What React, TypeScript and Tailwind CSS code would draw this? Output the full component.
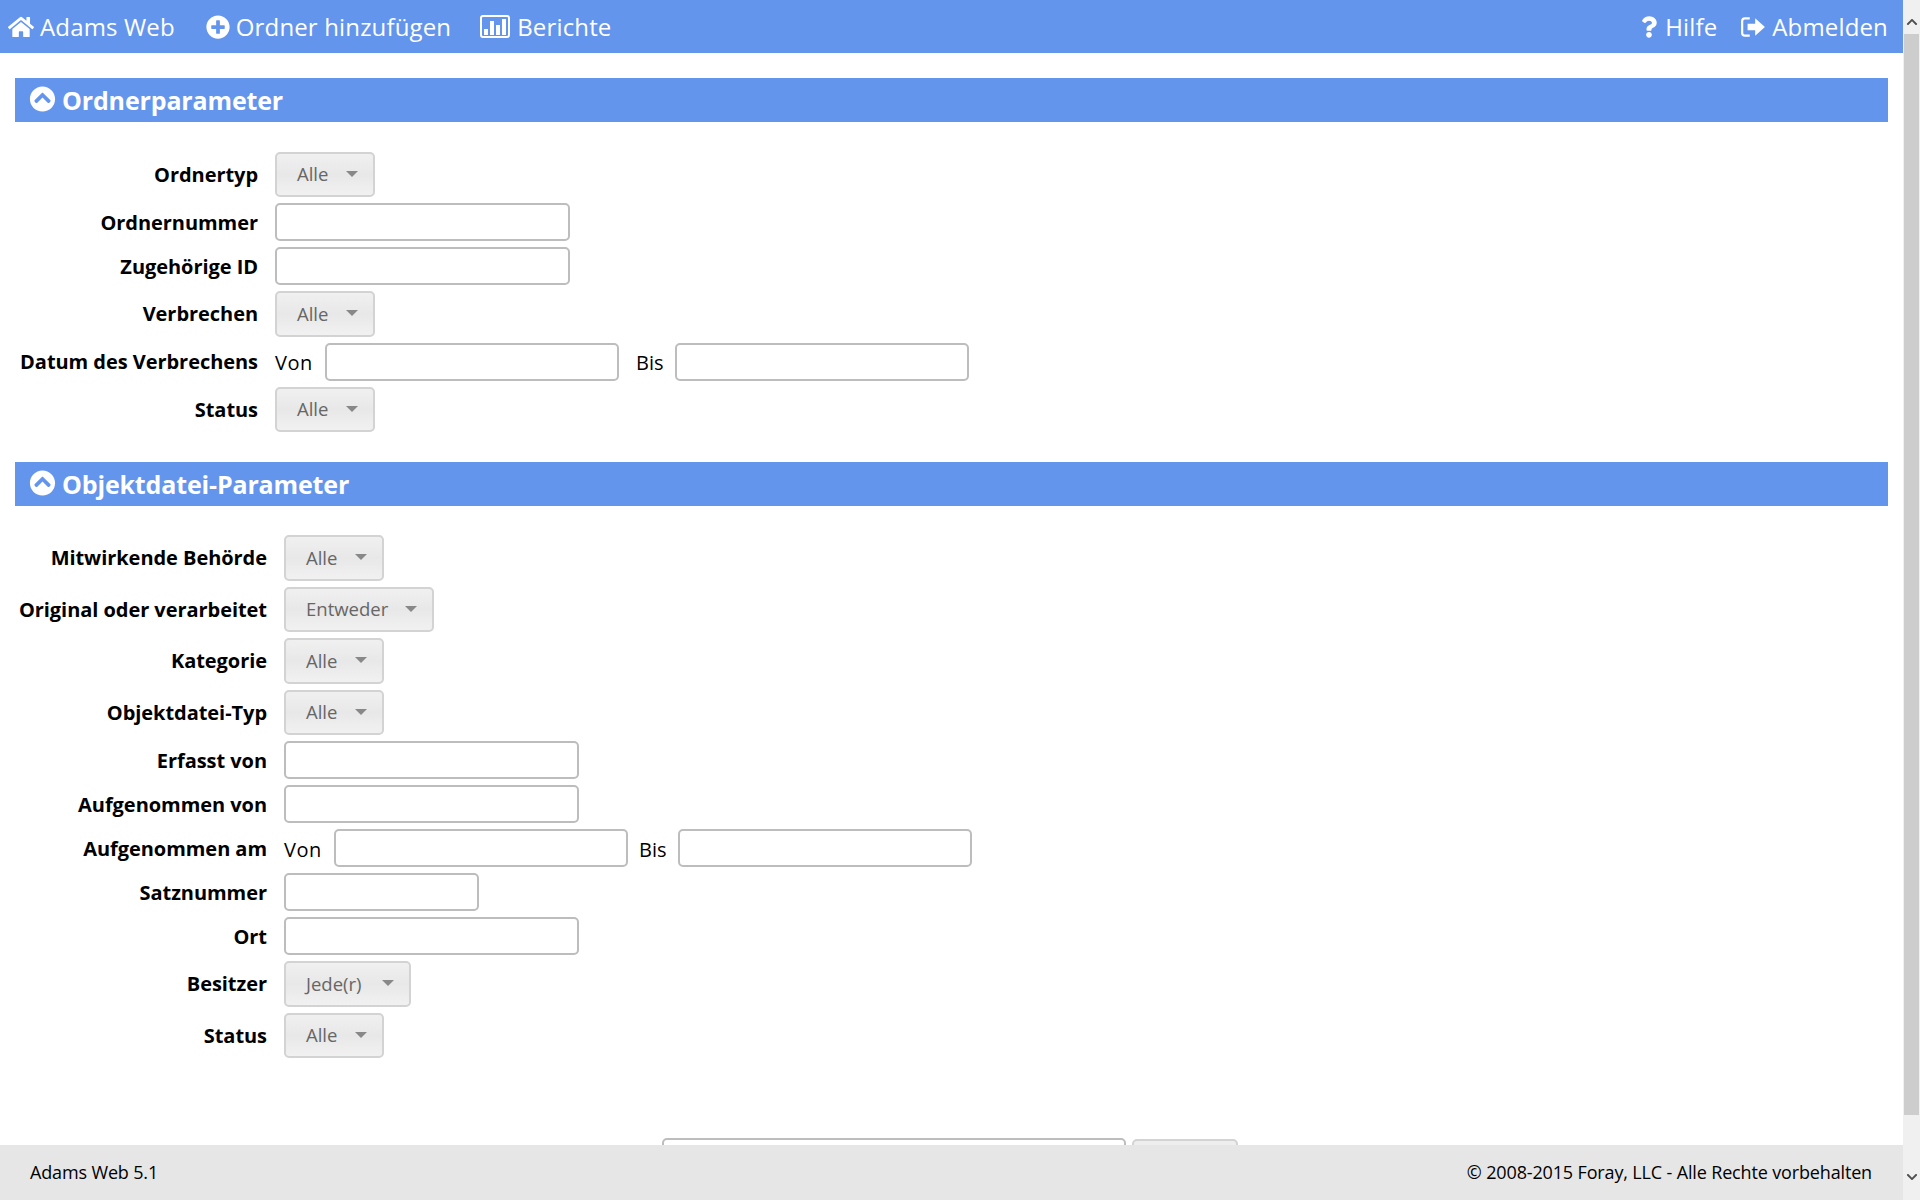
import React from "react";
import { FaHome, FaPlusCircle, FaQuestion, FaChevronCircleUp, FaChevronUp, FaChevronDown } from "react-icons/fa";

const font = { fontFamily: '"Open Sans", "Noto Sans", sans-serif' };

function Dropdown({ text, w }: { text: string; w: string }) {
  return (
    <div className={`${w} h-[45.5px] flex items-center justify-between pl-[20px] pr-[15px] rounded-[5px] border-2 border-[#d3d3d3] bg-gradient-to-b from-[#f0f0f0] via-[#e8e8e8] to-[#f1f1f1] text-[18.5px] text-[#666]`}>
      <span>{text}</span>
      <span className="w-0 h-0 -mt-[1px] border-x-[6px] border-x-transparent border-t-[6px] border-t-[#888]" />
    </div>
  );
}

function Input({ w }: { w: string }) {
  return <div className={`${w} h-[38px] rounded-[5px] border-2 border-[#bdbdbd] bg-white`} />;
}

function Row({ label, labelW, children }: { label: string; labelW: string; children: React.ReactNode }) {
  return (
    <div className="flex items-center gap-[17px]">
      <div className={`${labelW} pt-[1px] text-right text-[20px] font-bold text-black tracking-[-0.05px] whitespace-nowrap`}>{label}</div>
      {children}
    </div>
  );
}

function Range({ inputW, bisGap, gapVon }: { inputW: string; bisGap: string; gapVon: string }) {
  return (
    <div className="flex items-center text-[20px] text-black">
      <span className={`${gapVon} pt-[3px] tracking-[0.5px]`}>Von</span>
      <Input w={inputW} />
      <span className={`${bisGap} pt-[3px]`}>Bis</span>
      <Input w={inputW} />
    </div>
  );
}

function Header({ title }: { title: string }) {
  return (
    <div className="h-[44px] bg-[#6495ed] flex items-center pl-[14px] text-white font-bold text-[25px] tracking-[-0.15px]">
      <FaChevronCircleUp className="w-[27px] h-[26px] mr-[6px] -mt-[2px]" />
      <span className="pt-[1px]">{title}</span>
    </div>
  );
}

function NavItem({ icon, text, cls }: { icon: React.ReactNode; text: string; cls: string }) {
  return (
    <div className={`flex items-center ${cls} text-white text-[24px] tracking-[0.15px] whitespace-nowrap`}>
      {icon}
      <span>{text}</span>
    </div>
  );
}

function BarChartIcon() {
  return (
    <svg viewBox="0 0 30 23" className="w-[30px] h-[23px]" fill="#fff">
      <rect x="1" y="1" width="28" height="21" rx="2" fill="none" stroke="#fff" strokeWidth="2" />
      <rect x="4" y="14" width="4" height="6" />
      <rect x="10" y="6" width="4" height="14" />
      <rect x="16" y="10" width="4" height="10" />
      <rect x="22" y="4" width="4" height="16" />
    </svg>
  );
}

function SignOutIcon() {
  return (
    <svg viewBox="0 0 24 20" className="w-[26px] h-[22px]">
      <path d="M9 2H4.5Q2 2 2 4.5V15.500Q2 18 4.500 18H9" fill="none" stroke="#fff" strokeWidth="2" />
      <polygon points="7,7 14,7 14,2 23,10 14,18 14,13 7,13" fill="#fff" />
    </svg>
  );
}

export default function App() {
  return (
    <div className="w-[1920px] h-[1200px] flex overflow-hidden bg-white" style={font}>
      <div className="w-[1903px] h-full flex flex-col">
        <nav className="h-[53px] shrink-0 bg-[#6495ed] flex items-center justify-between pl-[8px] pr-[15px]">
          <div className="flex items-center gap-[29px]">
            <NavItem cls="gap-[6px]" icon={<FaHome className="w-[26px] h-[24px]" />} text="Adams Web" />
            <NavItem cls="gap-[6px] ml-[2px]" icon={<FaPlusCircle className="w-[24px] h-[24px]" />} text="Ordner hinzufügen" />
            <NavItem cls="gap-[7px]" icon={<BarChartIcon />} text="Berichte" />
          </div>
          <div className="flex items-center gap-[23px]">
            <NavItem cls="gap-[8px]" icon={<FaQuestion className="w-[16px] h-[22px]" />} text="Hilfe" />
            <NavItem cls="gap-[6px] tracking-[0.3px]" icon={<SignOutIcon />} text="Abmelden" />
          </div>
        </nav>
        <main className="flex-1 overflow-hidden pt-[25px] px-[15px]">
          <Header title="Ordnerparameter" />
          <div className="flex flex-col gap-[6px] pt-[29.500px]">
            <Row label="Ordnertyp" labelW="w-[243px]"><Dropdown text="Alle" w="w-[100px]" /></Row>
            <Row label="Ordnernummer" labelW="w-[243px]"><Input w="w-[295px]" /></Row>
            <Row label="Zugehörige ID" labelW="w-[243px]"><Input w="w-[295px]" /></Row>
            <Row label="Verbrechen" labelW="w-[243px]"><Dropdown text="Alle" w="w-[100px]" /></Row>
            <Row label="Datum des Verbrechens" labelW="w-[243px]"><Range inputW="w-[294px]" gapVon="w-[50px]" bisGap="w-[56px] pl-[17px]" /></Row>
            <Row label="Status" labelW="w-[243px]"><Dropdown text="Alle" w="w-[100px]" /></Row>
          </div>
          <div className="mt-[30px]"><Header title="Objektdatei-Parameter" /></div>
          <div className="flex flex-col gap-[6px] pt-[29px]">
            <Row label="Mitwirkende Behörde" labelW="w-[252px]"><Dropdown text="Alle" w="w-[100px]" /></Row>
            <Row label="Original oder verarbeitet" labelW="w-[252px]"><Dropdown text="Entweder" w="w-[150px]" /></Row>
            <Row label="Kategorie" labelW="w-[252px]"><Dropdown text="Alle" w="w-[100px]" /></Row>
            <Row label="Objektdatei-Typ" labelW="w-[252px]"><Dropdown text="Alle" w="w-[100px]" /></Row>
            <Row label="Erfasst von" labelW="w-[252px]"><Input w="w-[295px]" /></Row>
            <Row label="Aufgenommen von" labelW="w-[252px]"><Input w="w-[295px]" /></Row>
            <Row label="Aufgenommen am" labelW="w-[252px]"><Range inputW="w-[294px]" gapVon="w-[50px]" bisGap="w-[50px] pl-[11px]" /></Row>
            <Row label="Satznummer" labelW="w-[252px]"><Input w="w-[195px]" /></Row>
            <Row label="Ort" labelW="w-[252px]"><Input w="w-[295px]" /></Row>
            <Row label="Besitzer" labelW="w-[252px]"><Dropdown text="Jede(r)" w="w-[127px]" /></Row>
            <Row label="Status" labelW="w-[252px]"><Dropdown text="Alle" w="w-[100px]" /></Row>
          </div>
          <div className="flex gap-[6px] mt-[80px] ml-[647px]">
            <Input w="w-[464px]" />
            <div className="w-[106px] h-[38px] mt-[1px] rounded-[5px] border-2 border-[#d3d3d3] bg-[#eeeeee]" />
          </div>
        </main>
        <footer className="h-[55px] shrink-0 bg-[#e6e6e6] flex items-center justify-between pl-[30px] pr-[31px] text-[18px] text-black tracking-[-0.15px]">
          <span>Adams Web 5.1</span>
          <span>© 2008-2015 Foray, LLC - Alle Rechte vorbehalten</span>
        </footer>
      </div>
      <div className="w-[17px] h-full flex flex-col bg-[#f0f0f0]">
        <div className="h-[34px] flex justify-center pt-[16px] text-[#505050]"><FaChevronUp className="w-[12px] h-[12px]" /></div>
        <div className="h-[1081px] mx-[1px] bg-[#cdcdcd]" />
        <div className="flex-1 flex items-end justify-center pb-[17px] text-[#505050]"><FaChevronDown className="w-[12px] h-[12px]" /></div>
      </div>
    </div>
  );
}
